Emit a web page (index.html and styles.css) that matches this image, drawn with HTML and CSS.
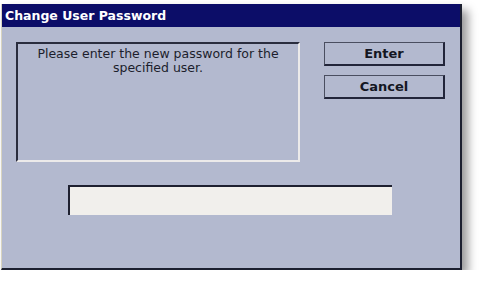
FILE: index.html
```html
<!DOCTYPE html>
<html>
<head>
<meta charset="utf-8">
<link rel="stylesheet" href="styles.css">
</head>
<body>
<div class="window">
  <div class="titlebar">Change User Password</div>
  <div class="content">
    <div class="top-row">
      <div class="message">Please enter the new password for the specified user.</div>
      <div class="buttons">
        <div class="btn">Enter</div>
        <div class="btn">Cancel</div>
      </div>
    </div>
    <div class="input-row">
      <div class="input"></div>
    </div>
  </div>
</div>
</body>
</html>
```

FILE: styles.css
```css
html, body {
  margin: 0;
  padding: 0;
  background: #ffffff;
}
body {
  font-family: "DejaVu Sans", "Liberation Sans", sans-serif;
}
.window {
  margin: 4px 0 0 1px;
  width: 461px;
  height: 266px;
  box-sizing: border-box;
  background: #b3b9cf;
  border-right: 2px solid #1c2030;
  border-bottom: 2px solid #1c2030;
  border-left: 1px solid #d8d4c0;
  box-shadow: 6px 6px 9px rgba(0, 0, 0, 0.4);
  display: flex;
  flex-direction: column;
}
.titlebar {
  height: 23px;
  background: #0c0d68;
  color: #ffffff;
  font-weight: bold;
  font-size: 12.5px;
  line-height: 23px;
  padding-left: 3px;
}
.content {
  padding: 15px 0 0 14px;
}
.top-row {
  display: flex;
  align-items: flex-start;
}
.message {
  width: 284px;
  height: 120px;
  box-sizing: border-box;
  border-top: 2px solid #2a2d3e;
  border-left: 2px solid #2a2d3e;
  border-right: 2px solid #eceaea;
  border-bottom: 2px solid #eceaea;
  text-align: center;
  font-size: 12.5px;
  line-height: 14px;
  color: #1c1e2c;
  padding: 3px 8px 0;
}
.buttons {
  margin-left: 24px;
  display: flex;
  flex-direction: column;
  gap: 9px;
}
.btn {
  width: 121px;
  height: 24px;
  box-sizing: border-box;
  border-top: 1px solid #4a4e60;
  border-left: 1px solid #4a4e60;
  border-right: 2px solid #22253a;
  border-bottom: 2px solid #22253a;
  text-align: center;
  font-weight: bold;
  font-size: 13px;
  line-height: 21px;
  color: #141622;
}
.input-row {
  padding: 23px 0 0 52px;
}
.input {
  width: 324px;
  height: 30px;
  box-sizing: border-box;
  background: #f1efec;
  border-top: 2px solid #1e2030;
  border-left: 2px solid #1e2030;
}
```
